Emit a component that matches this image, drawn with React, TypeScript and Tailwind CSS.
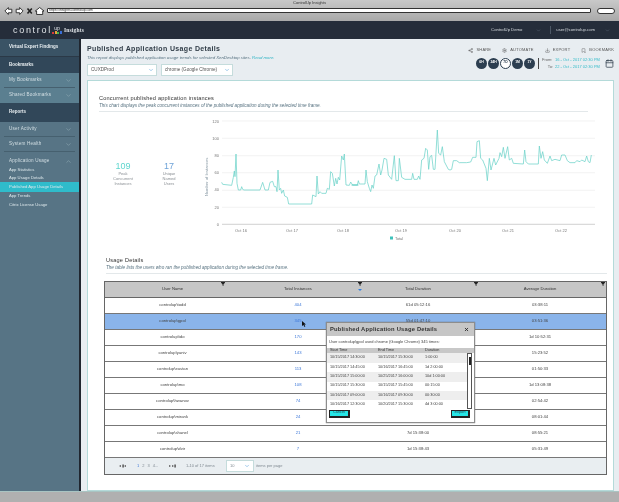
import { Calendar, ChevronDown, ChevronUp, Download, Bookmark, Settings, Share2, X } from "lucide-react";

const font = { fontFamily: '"Liberation Sans", Arial, sans-serif' };

// trace of the chart, in zoomed crop coordinates (3x)
const partA = [
  [395, 277], [398, 283], [425, 286], [430, 262], [433, 243], [435, 260], [438, 192], [441, 280], [445, 300], [452, 300], [455, 290], [458, 298], [462, 300], [510, 300], [518, 277], [525, 300], [535, 300], [540, 277], [548, 274], [553, 290], [558, 290], [561, 305], [564, 240], [568, 300], [572, 295], [575, 310], [580, 300], [584, 318], [592, 322], [596, 342], [665, 342], [668, 315], [678, 320], [681, 258], [685, 312], [690, 305], [695, 310], [708, 310], [712, 295], [718, 298], [722, 245], [727, 250], [733, 288], [737, 265], [741, 282], [745, 262], [749, 270], [755, 198], [760, 210], [763, 192], [768, 285], [778, 286], [782, 276], [788, 285], [805, 285],
];
const partB = [
  [5, 285], [22, 285], [25, 272], [28, 282], [45, 282], [48, 240], [52, 275], [58, 295], [62, 305], [66, 285], [70, 295], [75, 258], [80, 255], [87, 222], [92, 255], [96, 240], [102, 205], [110, 208], [115, 255], [125, 268], [133, 197], [138, 272], [145, 272], [148, 205], [155, 262], [165, 268], [185, 268], [188, 250], [192, 268], [202, 268], [206, 258], [210, 268], [215, 210], [222, 205], [227, 175], [232, 180], [236, 238], [240, 200], [245, 196], [250, 238], [255, 238], [262, 120], [266, 190], [272, 195], [277, 170], [283, 215], [295, 238], [300, 240], [305, 238], [310, 212], [320, 212], [328, 218], [350, 218], [362, 216], [368, 202], [378, 202], [381, 155], [388, 152], [392, 205], [398, 210], [408, 235], [412, 272], [418, 205], [423, 240], [432, 205], [437, 225], [447, 205], [450, 188], [455, 200], [460, 172], [465, 205], [473, 170], [478, 210], [485, 205], [490, 220], [520, 222], [524, 180], [528, 215], [535, 222], [565, 222], [568, 168], [573, 205], [578, 185], [583, 210], [592, 220], [600, 198], [605, 212], [615, 208], [630, 212], [635, 195], [645, 195], [652, 212], [660, 218], [675, 218], [680, 212], [690, 215], [695, 210], [705, 215], [710, 198], [715, 215], [720, 218], [724, 195],
];
const trace = [
  ...partA.map(([x, y]) => `${90 + x / 3},${90 + y / 3}`),
  ...partB.map(([x, y]) => `${350 + x / 3},${90 + y / 3}`),
].join(" ");

const users = [
  ["controlup\\todd", "404", "61d 05:12:16", "03:38:11"],
  ["controlup\\gpol", "345", "55d 01:47:10", "03:51:36"],
  ["controlup\\ido", "170", "", "1d 10:52:31"],
  ["controlup\\yaniv", "143", "", "15:23:52"],
  ["controlup\\eustan", "113", "", "01:50:33"],
  ["controlup\\mo", "108", "", "1d 13:08:38"],
  ["controlup\\hwanov", "74", "", "02:54:42"],
  ["controlup\\mirank", "24", "", "08:01:44"],
  ["controlup\\shanel", "21", "7d 15:38:00", "08:55:21"],
  ["controlup\\dvir", "7", "1d 15:38:43", "05:31:49"],
];

const sessions = [
  ["10/15/2017 14:30:00", "10/15/2017 15:30:00", "1:00:00"],
  ["10/15/2017 14:45:00", "10/16/2017 16:45:00", "1d 2:00:00"],
  ["10/15/2017 15:00:00", "10/25/2017 16:00:00", "10d 1:00:00"],
  ["10/15/2017 15:30:00", "10/15/2017 15:45:00", "00:15:00"],
  ["10/16/2017 09:00:00", "10/16/2017 09:30:00", "00:30:00"],
  ["10/16/2017 12:30:00", "10/20/2017 15:30:00", "4d 3:00:00"],
];

const gridCols = "grid grid-cols-[135px_116px_124px_1fr]";

function Funnel({ className }: { className: string }) {
  return (
    <svg viewBox="0 0 8 8" className={className}>
      <path d="M0 0h8v1.4L5 4.4V8L3 7V4.4L0 1.4z" fill="#222" />
    </svg>
  );
}

function SideHead({ label, className }: { label: string; className: string }) {
  return (
    <div className={`flex items-center pl-[9px] text-[4.5px] font-bold text-[#e8eef1] ${className}`}>
      {label}
    </div>
  );
}

function SideItem({ label, rule, open, className = "h-[15px]" }: { label: string; rule?: boolean; open?: boolean; className?: string }) {
  const Icon = open ? ChevronUp : ChevronDown;
  return (
    <div className={`mx-[4px] flex items-center justify-between pl-[5px] pr-[3px] text-[4.6px] tracking-[0.2px] text-[#d3dfe4] ${rule ? "border-b border-[#46606f]" : ""} ${className}`}>
      {label}
      <Icon className="size-[7px] text-[#8fa8b4]" />
    </div>
  );
}

function Sidebar() {
  return (
    <aside className="flex w-[81px] shrink-0 flex-col border-r-2 border-[#20262f] bg-[#577485]">
      <SideHead label="Virtual Expert Findings" className="h-[18px] border-b border-[#2b3947] bg-[#3a5365]" />
      <SideHead label="Bookmarks" className="h-[16px] bg-[#314759]" />
      <div className="bg-[#5b7f90]">
        <SideItem label="My Bookmarks" rule />
        <SideItem label="Shared Bookmarks" />
      </div>
      <SideHead label="Reports" className="h-[19px] bg-[#314759]" />
      <SideItem label="User Activity" rule />
      <SideItem label="System Health" rule />
      <SideItem label="Application Usage" open className="h-[14px] pt-[4px]" />
      <div className="flex flex-col text-[4.2px] text-[#dce7eb]">
        <span className="flex h-[8.500px] items-center pl-[9px]">App Statistics</span>
        <span className="flex h-[7.500px] items-center pl-[9px]">App Usage Details</span>
        <span className="flex h-[10px] items-center bg-[#2fbccb] pl-[9px]">Published App Usage Details</span>
        <span className="flex h-[8.500px] items-center pl-[9px]">App Trends</span>
        <span className="flex h-[8.500px] items-center pl-[9px]">Citrix License Usage</span>
      </div>
    </aside>
  );
}

function Chart() {
  const grid = [121, 138.3, 155.7, 172.7, 190.3, 207.3];
  const labels = ["120", "100", "80", "60", "40", "20", "0"];
  const days = [["Oct 16", 241], ["Oct 17", 292], ["Oct 18", 343], ["Oct 19", 401], ["Oct 20", 455], ["Oct 21", 508], ["Oct 22", 561]] as const;
  return (
    <svg viewBox="195 112 405 138" className="h-[138px] w-[405px]" style={font}>
      {grid.map((y) => (
        <line key={y} x1="222" x2="595" y1={y} y2={y} stroke="#ececec" strokeWidth="0.7" />
      ))}
      <line x1="222" x2="595" y1="224.3" y2="224.3" stroke="#bdbdbd" strokeWidth="0.7" />
      {labels.map((t, i) => (
        <text key={t} x="219" y={122.5 + i * 17.2} textAnchor="end" fontSize="4" fill="#777">{t}</text>
      ))}
      <text transform="translate(208 177) rotate(-90)" textAnchor="middle" fontSize="4.2" fill="#8a9aa5">Number of Instances</text>
      {days.map(([d, x]) => (
        <text key={d} x={x} y="231.5" textAnchor="middle" fontSize="4" fill="#777">{d}</text>
      ))}
      <polyline points={trace} fill="none" stroke="#6dd3ca" strokeWidth="0.75" strokeLinejoin="round" />
      <rect x="390" y="236.5" width="3" height="3" fill="#3fc2bb" />
      <text x="395" y="239.5" fontSize="3.8" fill="#777">Total</text>
    </svg>
  );
}

function Stat({ value, color, lines }: { value: string; color: string; lines: string[] }) {
  return (
    <div className="flex w-[46px] flex-col items-center">
      <span className={`text-[9px] leading-[11px] ${color}`}>{value}</span>
      {lines.map((l) => (
        <span key={l} className="text-[4px] leading-[4.800px] text-[#8a8f94]">{l}</span>
      ))}
    </div>
  );
}

function UsageModal() {
  return (
    <div className="absolute left-[221px] top-[40px] flex h-[101px] w-[149px] flex-col border border-[#8d8d8d] bg-white shadow-[0_0_1px_#666]">
      <div className="flex h-[14px] items-center justify-between bg-[#c6c6c6] pl-[3px] pr-[5px] text-[5.8px] font-bold tracking-[0.2px] text-[#333]">
        Published Application Usage Details
        <X className="size-[5px] text-[#222]" strokeWidth={4} />
      </div>
      <div className="flex h-[13px] items-center pl-[2px] text-[4px] text-[#444]">
        User controlup\gpol used chrome (Google Chrome) 345 times:
      </div>
      <div className="grid h-[5px] grid-cols-[48px_47px_1fr] items-center bg-[#c8c8c8] pl-[3px] pr-[9px] text-[3.8px] text-[#333]">
        <span>Start Time</span>
        <span>End Time</span>
        <span>Duration</span>
      </div>
      <div className="flex flex-1">
        <div className="flex flex-1 flex-col">
          {sessions.map((s, i) => (
            <div key={s[0]} className={`grid h-[9.400px] grid-cols-[48px_47px_1fr] items-center pl-[3px] text-[3.8px] text-[#444] ${i % 2 === 0 ? "bg-[#eeeeee]" : "bg-white"}`}>
              <span>{s[0]}</span>
              <span>{s[1]}</span>
              <span>{s[2]}</span>
            </div>
          ))}
        </div>
        <div className="relative mr-[2px] h-[56px] w-[5px] border border-[#555] bg-white">
          <div className="ml-[0.500px] mt-[3px] h-[8px] w-[2px] bg-[#222]" />
        </div>
      </div>
      <div className="flex h-[13px] items-start justify-between px-[2px] pb-[1px]">
        <div className="flex h-[8px] w-[21px] items-center justify-center border border-b-2 border-r-2 border-[#222] bg-[#25e6e6] text-[3.8px] text-[#245]">Cancel</div>
        <div className="mr-[2px] flex h-[8px] w-[19px] items-center justify-center border border-b-2 border-r-2 border-[#222] bg-[#25e6e6] text-[3.8px] text-[#245]">Export</div>
      </div>
    </div>
  );
}

function UsageTable() {
  return (
    <div className="relative ml-[5px] w-[503px] border border-[#666]">
      <div className={`${gridCols} h-[16px] items-center border-b border-[#666] bg-[#c6c6c6] text-center text-[4.2px] text-[#333]`}>
        <span className="relative">User Name<Funnel className="absolute right-[15px] top-[-4px] size-[4px]" /></span>
        <span className="relative">Total Instances<Funnel className="absolute right-[-6px] top-[-4px] size-[4px]" /><i className="absolute right-[-6px] top-[3px] h-0 w-0 border-x-[2px] border-t-[2px] border-x-transparent border-t-[#2f7fe0]" /></span>
        <span className="relative">Total Duration<Funnel className="absolute right-[2px] top-[-4px] size-[4px]" /></span>
        <span className="relative pr-[6px]">Average Duration<Funnel className="absolute right-[1px] top-[-4px] size-[4px]" /></span>
      </div>
      {users.map((u, i) => (
        <div key={u[0]} className={`${gridCols} h-[16px] items-center border-b border-[#777] text-center text-[4.2px] text-[#444] ${i === 1 ? "bg-[#8ab4ea]" : "bg-white"}`}>
          <span>{u[0]}</span>
          <span className="text-[#3d78d8]">{u[1]}</span>
          <span>{u[2]}</span>
          <span className="pr-[6px]">{u[3]}</span>
        </div>
      ))}
      <div className="flex h-[16px] items-center bg-[#e9eef1] pl-[14px] text-[4px] text-[#808a92]">
        <span className="w-[18px] text-[#555]">◂ ▮◂</span>
        <span className="flex w-[32px] gap-[3px]">
          <b className="font-normal text-[#3d78d8]">1</b>
          <span>2</span>
          <span>3</span>
          <span>4...</span>
        </span>
        <span className="w-[17px] text-[#555]">▸ ▸▮</span>
        <span className="w-[40px]">1-10 of 17 items</span>
        <div className="flex h-[12px] w-[28px] items-center justify-between border border-[#c5dcdc] bg-white px-[3px]">
          10
          <ChevronDown className="size-[6px] text-[#4d9bd8]" />
        </div>
        <span className="ml-[2px]">items per page</span>
      </div>
      <UsageModal />
      <svg viewBox="0 0 8 12" className="absolute left-[197px] top-[39px] h-[6px] w-[4px]">
        <path d="M0 0l8 7H4.600l2 4-1.600 1-2-4L0 10z" fill="#111" />
      </svg>
    </div>
  );
}

function Action({ icon, label }: { icon: React.ReactNode; label: string }) {
  return (
    <span className="flex items-center gap-[3px] text-[4px] tracking-[0.2px] text-[#555]">
      {icon}
      {label}
    </span>
  );
}

function Select({ value, width }: { value: string; width: string }) {
  return (
    <div className={`flex h-[12px] items-center justify-between border border-[#c5dcdc] bg-white pl-[3px] pr-[2px] text-[4.6px] text-[#555] ${width}`}>
      {value}
      <ChevronDown className="size-[6px] text-[#4d9bd8]" />
    </div>
  );
}

function Main() {
  return (
    <main className="flex flex-1 flex-col bg-[#e8edf1] pl-[6px] pr-[5px]">
      <div className="flex h-[41px] justify-between">
        <div className="flex flex-col">
          <h1 className="mt-[5px] text-[7px] font-bold leading-[10px] tracking-[0.35px] text-[#2f3b46]">Published Application Usage Details</h1>
          <p className="text-[4.3px] italic leading-[7px] text-[#55707f]">
            This report displays published application usage trends for selected XenDesktop sites. <span className="text-[#2fb4c4]">Read more.</span>
          </p>
          <div className="mt-[3px] flex gap-[4px]">
            <Select value="CUXDProd" width="w-[70px]" />
            <Select value="chrome (Google Chrome)" width="w-[72px]" />
          </div>
        </div>
        <div className="flex flex-col items-end">
          <div className="mt-[8px] flex gap-[11px]">
            <Action icon={<Share2 className="size-[5px]" />} label="SHARE" />
            <Action icon={<Settings className="size-[5px]" />} label="AUTOMATE" />
            <Action icon={<Download className="size-[5px]" />} label="EXPORT" />
            <Action icon={<Bookmark className="size-[5px]" />} label="BOOKMARK" />
          </div>
          <div className="mt-[3px] flex items-center">
            <div className="flex gap-[1px] text-[3.4px] font-bold text-white">
              {["6H", "24H", "7D", "1M", "1Y"].map((p) => (
                <span key={p} className={`flex size-[11px] items-center justify-center rounded-full ${p === "7D" ? "border border-[#2c3e50] bg-white text-[#2c3e50]" : "bg-[#2c3e50]"}`}>{p}</span>
              ))}
            </div>
            <div className="ml-[3px] h-[11px] border-l border-[#444]" />
            <div className="ml-[3px] grid grid-cols-[13px_49px] text-[4px] leading-[7px] text-[#666]">
              <span>From:</span>
              <span className="text-[#33bcc9]">16 - Oct - 2017 02:30 PM</span>
              <span className="text-right pr-[2px]">To:</span>
              <span className="text-[#33bcc9]">22 - Oct - 2017 02:30 PM</span>
            </div>
            <Calendar className="ml-[1px] size-[9px] text-[#33424f]" />
          </div>
        </div>
      </div>
      <section className="flex h-[411px] flex-col border border-[#b4dad9] bg-white pl-[11px] pr-[6px] pt-[13px]">
        <h2 className="text-[5.6px] leading-[8px] tracking-[0.2px] text-[#333]">Concurrent published application instances</h2>
        <p className="mt-[1px] text-[4.6px] italic leading-[6px] text-[#55707f]">This chart displays the peak concurrent instances of the published application during the selected time frame.</p>
        <hr className="mt-[2px] w-[489px] border-[#e3e8ea]" />
        <div className="flex">
          <div className="flex w-[96px] items-center pb-[14px] pl-[1px]">
            <Stat value="109" color="text-[#5fd6ce]" lines={["Peak", "Concurrent", "Instances"]} />
            <Stat value="17" color="text-[#6fa3d8]" lines={["Unique", "Named", "Users"]} />
          </div>
          <Chart />
        </div>
        <div className="pl-[7px]">
          <h2 className="mt-[6px] text-[5.6px] leading-[8px] tracking-[0.2px] text-[#333]">Usage Details</h2>
          <p className="mt-[1px] text-[4.6px] italic leading-[6px] text-[#55707f]">The table lists the users who ran the published application during the selected time frame.</p>
          <hr className="mt-[2px] border-[#e3e8ea]" />
        </div>
        <div className="mt-[7px]">
          <UsageTable />
        </div>
      </section>
    </main>
  );
}

function BrowserBar() {
  return (
    <div className="relative h-[21px] shrink-0 bg-gradient-to-b from-[#c9c9c9] to-[#a9a9a9]">
      <div className="text-center text-[4px] leading-[5px] text-[#333]">ControlUp Insights</div>
      <div className="flex h-[11px] items-center gap-[3px] pl-[4px] pr-[4px]">
        <svg viewBox="0 0 46 10" className="h-[10px] w-[40px] shrink-0">
          <path d="M1 5l4-4v2h4v4H5v2z" fill="#fff" stroke="#222" />
          <path d="M22 5l-4-4v2h-4v4h4v2z" fill="#fff" stroke="#222" />
          <path d="M27 2l5 6M32 2l-5 6" stroke="#222" strokeWidth="1.8" />
          <path d="M36 5l5-4 5 4h-1.500v4h-7V5z" fill="#fff" stroke="#222" />
        </svg>
        <div className="flex h-[5px] flex-1 items-center rounded-[1px] border border-[#333] bg-white pl-[1px] text-[3.4px] text-[#333]">https://insights.controlup.com</div>
        <div className="ml-[3px] h-[6px] w-[18px] rounded-full border border-[#333] bg-white" />
      </div>
    </div>
  );
}

function TopBar() {
  return (
    <header className="flex h-[18px] shrink-0 items-center bg-[#252d3a] pl-[13px] pr-[9px] text-white">
      <span className="text-[9px] leading-none tracking-[1.7px] text-[#dfe3e7]">control</span>
      <span className="relative mr-[2px] flex w-[10px] flex-col items-center">
        <span className="text-[5px] leading-[5px] text-[#dfe3e7]">up</span>
        <span className="flex items-end gap-[0.500px]">
          <i className="h-[2px] w-[2px] bg-[#d83a3a]" />
          <i className="h-[3px] w-[2px] bg-[#e8a33a]" />
          <i className="h-[2px] w-[2px] bg-[#3fb44a]" />
          <i className="h-[3px] w-[2px] bg-[#3a6fd8]" />
        </span>
      </span>
      <span className="text-[5.5px] font-bold tracking-[0.2px] text-[#dfe3e7]" style={{ fontFamily: '"Liberation Serif", serif' }}>Insights</span>
      <span className="ml-auto text-[4.2px] text-[#d5dade]">ControlUp Demo</span>
      <ChevronDown className="ml-[14px] size-[5px] text-[#6c7885]" />
      <div className="ml-[9px] h-[8px] border-l border-[#4d5866]" />
      <span className="ml-[5px] text-[4.2px] text-[#d5dade]">user@controlup.com</span>
      <ChevronDown className="ml-[10px] size-[5px] text-[#6c7885]" />
    </header>
  );
}

export default function App() {
  return (
    <div className="flex h-[502px] w-[619px] flex-col overflow-hidden bg-[#b0b0b0] blur-[0.45px]" style={font}>
      <BrowserBar />
      <TopBar />
      <div className="flex h-[452px] shrink-0">
        <Sidebar />
        <Main />
      </div>
      <div className="h-[11px] shrink-0 border-t border-[#a9c4c2] bg-[#b0b0b0]" />
    </div>
  );
}
